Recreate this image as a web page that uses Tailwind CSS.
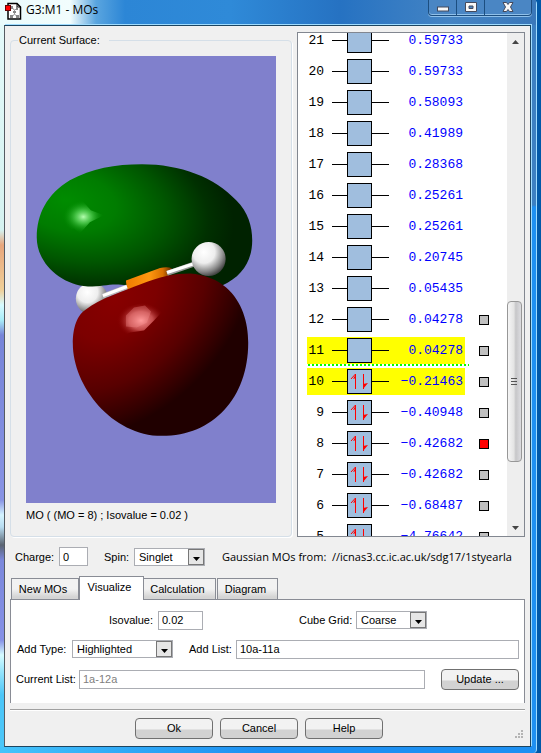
<!DOCTYPE html>
<html lang="en">
<head>
<meta charset="utf-8">
<title>G3:M1 - MOs</title>
<script src="https://cdn.jsdelivr.net/npm/@tailwindcss/browser@4"></script>
</head>
<body class="h-screen overflow-hidden bg-[#0058a8] font-['Liberation_Sans',Arial,sans-serif] text-[11px] leading-4 text-black">
<div class="flex h-full flex-col pr-1">
<div class="flex min-h-0 flex-1 flex-col rounded-r-sm border-r border-[#9fdcff] bg-[linear-gradient(90deg,#45c4fb_0px,#2fa8f6_130px,#1e90f2_260px,#1e90f2_100%)] pb-1.5">
  <header class="flex h-[25px] shrink-0 justify-between bg-[linear-gradient(90deg,#e9fbfc_0px,#f2fdfd_70px,#5aa5df_96px,#2c86d6_125px,#2f8ad8_230px,#2672c2_340px,#4484c4_450px,#3a78ba_100%)] pl-1">
    <div class="flex items-start gap-1">
      <svg class="mt-0.5" width="18" height="18" viewBox="0 0 18 18" aria-hidden="true">
        <path d="M4 1.500h9l3.500 3.500v12h-12.500z" fill="#fff" stroke="#000" stroke-width="1.500"/>
        <path d="M13 1.500v3.500h3.500" fill="none" stroke="#000"/>
        <path d="M8 5l2 3h1l2-2M10.500 8v4L8 15M10.500 12l3 3" fill="none" stroke="#999" stroke-width="1"/>
        <g fill="#888"><rect x="7" y="4" width="2" height="3"/><rect x="12" y="5" width="2" height="3"/><rect x="9" y="9" width="3" height="2"/><rect x="6" y="13" width="3" height="3"/><rect x="12" y="13" width="3" height="3"/></g>
        <rect x="1.500" y="3.500" width="5" height="5" fill="#f00" stroke="#600"/>
      </svg>
      <h1 class="mt-0.5 font-['Open_Sans','Noto_Sans',sans-serif] text-xs leading-4">G3:M1 - MOs</h1>
    </div>
    <div class="mr-1 flex h-4 divide-x divide-[#1c4e80] rounded-b border-x border-b border-[#1c4e80] bg-[#4a86c4] shadow-[inset_0_-1px_0_#8fc0ea,0_1px_0_#8fc0ea]">
      <button type="button" aria-label="Minimize" class="flex w-7 items-center justify-center"><svg width="14" height="12" viewBox="0 0 14 12"><rect x="1.500" y="5" width="11" height="4" fill="#f8f8f8" stroke="#454a5c"/></svg></button>
      <button type="button" aria-label="Maximize" class="flex w-7 items-center justify-center"><svg width="14" height="12" viewBox="0 0 14 12"><path fill-rule="evenodd" d="M1.500 .5h11v9h-11zM5 4v2.500h4v-2.500z" fill="#f8f8f8" stroke="#454a5c"/></svg></button>
      <button type="button" aria-label="Close" class="flex w-[46px] items-center justify-center"><svg width="14" height="12" viewBox="0 0 14 12"><path d="M2 .5h3.500L7 2.500l1.500-2H12L9.500 5l2.500 4.500H8.500L7 7.500l-1.500 2H2L4.500 5z" fill="#f8f8f8" stroke="#454a5c"/></svg></button>
    </div>
  </header>
  <div class="flex min-h-0 flex-1 bg-[linear-gradient(180deg,#3c80c2_0px,#3c80c2_180px,#1e90f2_182px,#1e90f2_100%)] pr-[5px]">
  <div class="flex min-h-0 min-w-0 flex-1 bg-[linear-gradient(180deg,#e4fafa_0px,#d5f2f0_205px,#e8a67c_220px,#efcf98_265px,#d8fbff_280px,#a8ecf8_295px,#7784d8_310px,#8893e4_475px,#d5f4ff_490px,#b8dcf0_502px,#5a6472_520px,#7b88dc_535px,#8590e6_615px,#d5fbff_630px,#9be6fc_645px,#4cc6f8_670px)] pl-1">
  <main class="flex min-h-0 min-w-0 flex-1 flex-col border border-[#1d4560] border-l-[#555b62] bg-[#f0f0f0] px-[5px] pt-1.5 shadow-[1px_-1px_0_#9fdcff]">
    <div class="flex min-h-0 flex-1 gap-[5px]">
      <fieldset class="flex min-h-0 min-w-0 flex-1 flex-col rounded-sm border border-[#d5dfe8] px-[15px] pb-[13px] shadow-[1px_1px_0_#fff]">
        <legend class="-ml-2 pr-[9px] pl-px">Current Surface:</legend>
        <svg class="mt-2 min-h-0 w-full flex-1 bg-[#8080cc]" viewBox="26 56 250 446" preserveAspectRatio="xMidYMid slice" role="img" aria-label="Molecular orbital surface">
          <defs>
            <radialGradient id="g" gradientUnits="userSpaceOnUse" cx="0" cy="0" r="1" gradientTransform="translate(66 200) rotate(12) scale(170 98)">
              <stop offset="0" stop-color="#008c00"/><stop offset=".3" stop-color="#007c00"/><stop offset=".6" stop-color="#005600"/><stop offset=".85" stop-color="#003000"/><stop offset="1" stop-color="#002200"/>
            </radialGradient>
            <radialGradient id="r" gradientUnits="userSpaceOnUse" cx="0" cy="0" r="1" gradientTransform="translate(115 298) rotate(45) scale(116 160)">
              <stop offset="0" stop-color="#880000"/><stop offset=".3" stop-color="#7c0000"/><stop offset=".65" stop-color="#580000"/><stop offset=".88" stop-color="#340000"/><stop offset="1" stop-color="#200000"/>
            </radialGradient>
            <radialGradient id="w" cx=".36" cy=".3" r=".72"><stop offset="0" stop-color="#fff"/><stop offset=".45" stop-color="#eee"/><stop offset=".8" stop-color="#888"/><stop offset="1" stop-color="#444"/></radialGradient>
            <radialGradient id="hg"><stop offset="0" stop-color="#b5ffb0"/><stop offset=".4" stop-color="#5fda5f" stop-opacity=".7"/><stop offset="1" stop-color="#009000" stop-opacity="0"/></radialGradient>
            <radialGradient id="hr"><stop offset="0" stop-color="#ff9a9a"/><stop offset=".5" stop-color="#dd6565" stop-opacity=".75"/><stop offset="1" stop-color="#8a0000" stop-opacity="0"/></radialGradient>
            <linearGradient id="o"><stop offset="0" stop-color="#f07c00"/><stop offset=".5" stop-color="#ff9810"/><stop offset=".8" stop-color="#d87000"/><stop offset="1" stop-color="#5a2800"/></linearGradient>
          </defs>
          <circle cx="92" cy="298" r="16" fill="url(#w)"/>
          <path d="M37 237C37 214 47 194 70 180C92 168 115 164 142 164C180 164 215 177 236 200C248 212 252 226 252 240C252 260 242 276 222 285L200 300L150 296L127 285C112 282 105 286 88 286C60 284 37 262 37 237Z" fill="url(#g)"/>
          <path d="M63 204L71 203L82 200L91 210L104 215L90 222L80 233L74 228L63 232Z" fill="url(#hg)"/>
          <path d="M126 280L160 267.500Q168 266 172 268L168 278L127 290Z" fill="url(#o)"/>
          <path d="M103 295.500L127 286.500" stroke="#bbb" stroke-width="5"/><path d="M103 295L127 286" stroke="#fff" stroke-width="3"/>
          <path d="M167 273L196 263" stroke="#999" stroke-width="5"/><path d="M167 272L196 262.500" stroke="#fff" stroke-width="3"/>
          <circle cx="208.500" cy="258.500" r="17" fill="url(#w)"/>
          <path d="M73 343C73 332 75 316 86 309C100 298 125 290 140 284C160 276 174 273 190 273C204 274 217 279 226 287C242 301 248 322 248 342C248 397 213 435 162 435C112 435 73 385 73 343Z" fill="url(#r)"/>
          <path d="M117 311L127 306L144 302L157 307L165 308L154 320L144 330L130 332L117 338Z" fill="url(#hr)"/>
          <path d="M126 315L134 307L145 305L151 311L147 322L137 327L126 326Z" fill="#ff9a9a" opacity=".3"/>
        </svg>
        <p class="mt-1">MO ( (MO = 8) ; Isovalue = 0.02 )</p>
      </fieldset>
      <section aria-label="Orbitals" class="flex w-[228px] shrink-0 overflow-hidden border border-[#828790] bg-white">
        <div class="min-w-0 flex-1 overflow-hidden pl-[9px]">
          <table class="-mt-2 border-collapse font-['Liberation_Mono','Courier_New',monospace] text-[13px]"><tbody id="orbitals"></tbody></table>
        </div>
        <div class="flex w-[17px] flex-col bg-[#eeeeee] pt-[5px] pb-1" role="scrollbar" aria-label="Orbitals scroll" aria-controls="orbitals" aria-valuenow="70">
          <svg class="shrink-0" width="17" height="8" viewBox="0 0 17 8"><path d="M5 6L8.500 2L12 6Z" fill="#444"/></svg>
          <div class="flex-[256]"></div>
          <div class="mr-0.5 flex flex-[160] flex-col items-center justify-center rounded-sm border border-[#979797] bg-[linear-gradient(90deg,#f5f5f5,#e4e4e4_45%,#c6c6c8_60%,#dcdce0)]">
            <svg width="7" height="9" viewBox="0 0 7 9"><path d="M0 1.500h6M0 4.500h6M0 7.500h6" stroke="#555"/></svg>
          </div>
          <div class="flex-[62]"></div>
          <svg class="shrink-0" width="17" height="8" viewBox="0 0 17 8"><path d="M5 2L8.500 6L12 2Z" fill="#444"/></svg>
        </div>
      </section>
    </div>
    <div class="flex h-[39px] shrink-0 items-center pr-1.5 pl-[5px]">
      <label for="charge" class="w-11">Charge:</label>
      <input id="charge" value="0" class="mr-4 h-[19px] w-[29px] border border-[#abadb3] bg-white px-[3px]">
      <label for="spin" class="w-[30px]">Spin:</label>
      <span class="relative mr-[17px] flex h-[18px] w-[71px] shrink-0">
        <select id="spin" class="h-full w-full appearance-none border border-[#abadb3] bg-white pl-1"><option>Singlet</option></select>
        <svg class="pointer-events-none absolute top-px right-px" width="16" height="16" viewBox="0 0 16 16"><rect x=".5" y=".5" width="15" height="15" fill="#e6e6e6" stroke="#777"/><path d="M5 8h7L8.500 12z"/></svg>
      </span>
      <p class="min-w-0 flex-1 overflow-hidden font-['Open_Sans','Noto_Sans',sans-serif] whitespace-pre">Gaussian MOs from:  //icnas3.cc.ic.ac.uk/sdg17/1styearla</p>
    </div>
    <nav class="relative -mb-px flex h-6 shrink-0 items-end pl-px" aria-label="Settings">
      <button type="button" class="h-[22px] w-[68px] border border-[#898c95] bg-linear-to-b from-[#f2f2f2] from-50% to-[#d4d4d4] to-90% pr-1">New MOs</button>
      <button type="button" class="h-6 w-[65px] border border-b-0 border-[#898c95] bg-white pr-1 pb-1">Visualize</button>
      <button type="button" class="h-[22px] w-[72px] border border-l-0 border-[#898c95] bg-linear-to-b from-[#f2f2f2] from-50% to-[#d4d4d4] to-90% pr-1">Calculation</button>
      <button type="button" class="ml-px h-[22px] w-[61px] border border-[#898c95] bg-linear-to-b from-[#f2f2f2] from-50% to-[#d4d4d4] to-90% pr-1">Diagram</button>
    </nav>
    <section aria-label="Visualize" class="flex shrink-0 flex-col gap-[9px] border border-b-0 border-[#898c95] bg-white px-[5px] pt-2.5 pb-[13px]">
      <div class="flex h-5 items-center pl-[93px]">
        <label for="iso" class="w-[49px]">Isovalue:</label>
        <input id="iso" value="0.02" class="mr-24 h-[19px] w-[45px] border border-[#abadb3] px-[3px]">
        <label for="grid" class="w-[57px]">Cube Grid:</label>
        <span class="relative flex h-[18px] w-[71px]">
          <select id="grid" class="h-full w-full appearance-none border border-[#abadb3] bg-white pl-1"><option>Coarse</option></select>
          <svg class="pointer-events-none absolute top-px right-px" width="16" height="16" viewBox="0 0 16 16"><rect x=".5" y=".5" width="15" height="15" fill="#e6e6e6" stroke="#777"/><path d="M5 8h7L8.500 12z"/></svg>
        </span>
      </div>
      <div class="flex h-5 items-center">
        <label for="type" class="w-14 pl-px">Add Type:</label>
        <span class="relative mr-4 flex h-[18px] w-[101px]">
          <select id="type" class="h-full w-full appearance-none border border-[#abadb3] bg-white pl-1"><option>Highlighted</option></select>
          <svg class="pointer-events-none absolute top-px right-px" width="16" height="16" viewBox="0 0 16 16"><rect x=".5" y=".5" width="15" height="15" fill="#e6e6e6" stroke="#777"/><path d="M5 8h7L8.500 12z"/></svg>
        </span>
        <label for="list" class="w-[47px]">Add List:</label>
        <input id="list" value="10a-11a" class="h-[19px] min-w-0 flex-1 border border-[#abadb3] px-[3px]">
      </div>
      <div class="flex h-[22px] items-center">
        <label for="current" class="w-[63px]">Current List:</label>
        <input id="current" value="1a-12a" readonly class="mr-4 h-[19px] min-w-0 flex-1 border border-[#abadb3] px-[3px] text-[#808080]">
        <button type="button" class="h-[21px] w-[78px] rounded-sm border border-[#707070] bg-linear-to-b from-[#f2f2f2] from-50% to-[#d2d2d2] to-60% leading-none">Update ...</button>
      </div>
    </section>
    <hr class="mt-1.5 h-0 shrink-0 border-t border-[#a0a0a0] shadow-[0_1px_0_#fff]">
    <footer class="flex h-9 shrink-0 items-center gap-[7px] pl-[125px]">
      <button type="button" class="h-[21px] w-[78px] rounded-sm border border-[#707070] bg-linear-to-b from-[#f2f2f2] from-50% to-[#d2d2d2] to-60% leading-none">Ok</button>
      <button type="button" class="h-[21px] w-[78px] rounded-sm border border-[#707070] bg-linear-to-b from-[#f2f2f2] from-50% to-[#d2d2d2] to-60% leading-none">Cancel</button>
      <button type="button" class="h-[21px] w-[78px] rounded-sm border border-[#707070] bg-linear-to-b from-[#f2f2f2] from-50% to-[#d2d2d2] to-60% leading-none">Help</button>
      <svg class="mr-0.5 mb-2 ml-auto self-end" width="8" height="8" viewBox="0 0 8 8" fill="#b4b4b4"><path d="M6 0h2v2H6zM3 3h2v2H3zM6 3h2v2H6zM0 6h2v2H0zM3 6h2v2H3zM6 6h2v2H6z"/></svg>
    </footer>
  </main>
  </div>
  </div>
</div>
</div>
<script>
const orbitals = [[21,'0.59733'],[20,'0.59733'],[19,'0.58093'],[18,'0.41989'],[17,'0.28368'],[16,'0.25261'],[15,'0.25261'],[14,'0.20745'],[13,'0.05435'],[12,'0.04278'],[11,'0.04278'],[10,'−0.21463'],[9,'−0.40948'],[8,'−0.42682'],[7,'−0.42682'],[6,'−0.68487'],[5,'−4.76642']];
const electrons = '<path d="M8.500 20V5L4 10M16.500 5v15" transform="translate(0 0)" fill="none" stroke="#f00"/><path d="M9 5v4l-3 1zM16 20v-5l5-1z" fill="#f00"/>';
document.getElementById('orbitals').innerHTML = orbitals.map(([n, e]) => {
  const cell = n === 10 || n === 11 ? 'flex h-[27px] items-center justify-end bg-[#ffff00]' : 'flex h-[27px] items-center justify-end';
  const mark = n === 8 ? 'block h-2.5 w-2.5 border border-black bg-[#ff0000]' : 'block h-2.5 w-2.5 border border-black bg-[#c0c0c0]';
  const gap = n === 11 ? '<span class="absolute top-[29px] left-px h-0.5 w-[161px] bg-[repeating-linear-gradient(90deg,#00ff00_0px,#00ff00_2px,transparent_2px,transparent_4px)]"></span>' : '';
  return `<tr class="h-[31px]">
    <td class="relative w-[25px] p-0"><div class="${cell}"><span class="pr-2">${n}</span></div>${gap}</td>
    <td class="w-[57px] p-0"><div class="${cell}"><svg width="57" height="25" viewBox="0 0 57 25"><path d="M0 12.500h57" stroke="#000"/><rect x="15.500" y=".5" width="24" height="24" fill="#a0bede" stroke="#000"/>${n <= 10 ? `<g transform="translate(15 0)">${electrons}</g>` : ''}</svg></div></td>
    <td class="w-[76px] p-0 text-[#0000ff]"><div class="${cell}"><span class="pr-0.5">${e}</span></div></td>
    <td class="w-6 p-0 pl-3.5">${n <= 12 ? `<span class="${mark}"></span>` : ''}</td>
  </tr>`;
}).join('');
</script>
</body>
</html>
